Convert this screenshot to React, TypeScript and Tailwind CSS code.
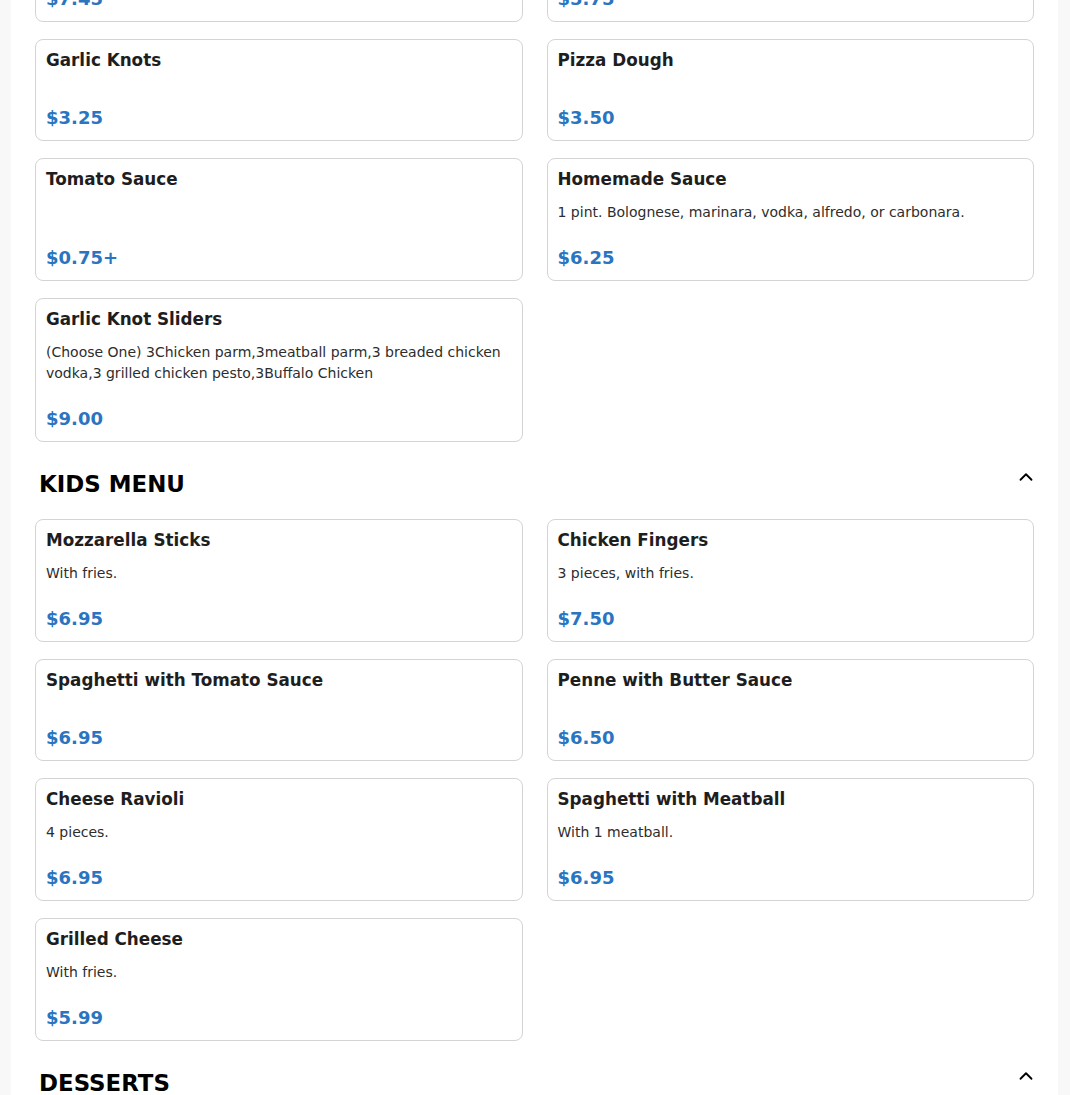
import { ChevronUp } from "lucide-react"

type Item = {
  title: string
  desc?: string
  price: string
}

const TOP: Item[] = [
  { title: "Zeppole", price: "$7.45" },
  { title: "Breadsticks", price: "$5.75" },
  { title: "Garlic Knots", price: "$3.25" },
  { title: "Pizza Dough", price: "$3.50" },
  { title: "Tomato Sauce", price: "$0.75+" },
  {
    title: "Homemade Sauce",
    desc: "1 pint. Bolognese, marinara, vodka, alfredo, or carbonara.",
    price: "$6.25",
  },
  {
    title: "Garlic Knot Sliders",
    desc: "(Choose One) 3Chicken parm,3meatball parm,3 breaded chicken vodka,3 grilled chicken pesto,3Buffalo Chicken",
    price: "$9.00",
  },
]

const KIDS: Item[] = [
  { title: "Mozzarella Sticks", desc: "With fries.", price: "$6.95" },
  { title: "Chicken Fingers", desc: "3 pieces, with fries.", price: "$7.50" },
  { title: "Spaghetti with Tomato Sauce", price: "$6.95" },
  { title: "Penne with Butter Sauce", price: "$6.50" },
  { title: "Cheese Ravioli", desc: "4 pieces.", price: "$6.95" },
  { title: "Spaghetti with Meatball", desc: "With 1 meatball.", price: "$6.95" },
  { title: "Grilled Cheese", desc: "With fries.", price: "$5.99" },
]

// ── Pieces ────────────────────────────────────────────────────────────────────

function MenuCard({ item }: { item: Item }) {
  return (
    <div className="flex flex-col rounded-lg border border-[#d4d4d4] bg-white px-[10px] pt-[10px] pb-[10px]">
      <h3 className="text-[16.8px] font-bold leading-5 text-[#1e1e1e]">{item.title}</h3>
      <div className="mt-[13px] flex-1">
        {item.desc && (
          <p className="text-[14px] leading-[21px] text-[#2d2d2d]">{item.desc}</p>
        )}
      </div>
      <p className="mt-[23px] text-[18px] font-bold leading-6 text-[#2a74c0]">{item.price}</p>
    </div>
  )
}

function SectionHeader({ title }: { title: string }) {
  return (
    <div className="mt-[28px] mb-[21px] flex items-start justify-between pl-1">
      <h2 className="text-[22.9px] font-bold leading-7 text-black">{title}</h2>
      <ChevronUp
        size={22}
        strokeWidth={2}
        className="-mt-[4px] -mr-[3px] text-black"
        aria-hidden="true"
      />
    </div>
  )
}

// ── Page ──────────────────────────────────────────────────────────────────────

export default function App() {
  return (
    <div
      className="min-h-screen overflow-hidden bg-[#f8f8f8] pl-[11px] pr-[12px]"
      style={{ fontFamily: '"DejaVu Sans", sans-serif' }}>
      <div className="min-h-screen bg-white px-6">
        <div className="-mt-[80px] grid grid-cols-2 gap-x-6 gap-y-[17px]">
          {TOP.map((it) => (
            <MenuCard key={it.title} item={it} />
          ))}
        </div>

        <SectionHeader title="KIDS MENU" />
        <div className="grid grid-cols-2 gap-x-6 gap-y-[17px]">
          {KIDS.map((it) => (
            <MenuCard key={it.title} item={it} />
          ))}
        </div>

        <SectionHeader title="DESSERTS" />
        <div className="grid grid-cols-2 gap-x-6 gap-y-[17px]">
          <MenuCard item={{ title: "Cannoli", price: "$3.50" }} />
          <MenuCard item={{ title: "Tiramisu", price: "$5.50" }} />
        </div>
      </div>
    </div>
  )
}
